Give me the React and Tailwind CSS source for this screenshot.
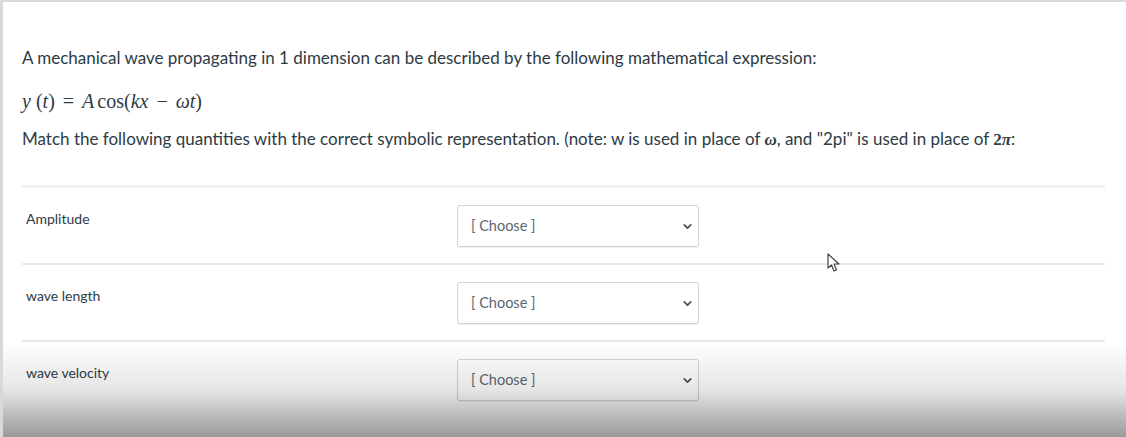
import { ChevronDown } from 'lucide-react';

const rows = ['Amplitude', 'wave length', 'wave velocity'];

const Choose = () => (
  <div className="flex items-center justify-between w-[242px] h-[42px] pl-[13px] pr-[4px] bg-white border border-[#d4d4d4] rounded-[3px] shadow-[0_1px_1px_rgba(0,0,0,0.06)]">
    <span className="text-[14.5px] text-[#5b6670]">[ Choose ]</span>
    <ChevronDown size={13} strokeWidth={3.2} className="text-[#4a4f55]" />
  </div>
);

const App = () => {
  return (
    <div className="relative w-[1126px] h-[437px] overflow-hidden bg-white border-t-2 border-l-[3px] border-[#d9d9d9] font-['Lato','Noto_Sans',sans-serif] text-[#2d3b45]">
      <div className="pl-[19px] pr-[21px] pt-[45px]">
        <p className="text-[17px] leading-[22px]">
          A mechanical wave propagating in 1 dimension can be described by the following mathematical expression:
        </p>
        <p className="mt-[20px] text-[20px] leading-[24px] font-['Liberation_Serif','DejaVu_Serif',serif]">
          <i>y</i> (<i>t</i>)<span className="mx-[8px]">=</span><i>A</i>
          <span className="ml-[3px]">cos(</span><i>kx</i>
          <span className="mx-[8px]">−</span><i>ωt</i>)
        </p>
        <p className="mt-[15px] text-[17px] leading-[22px]">
          Match the following quantities with the correct symbolic representation. (note: w is used in place of{' '}
          <i className="font-['Liberation_Serif',serif] font-bold">ω</i>, and "2pi" is used in place of{' '}
          <span className="font-['Liberation_Serif',serif] font-bold">2<i>π</i></span>:
        </p>

        <div className="mt-[34px] border-t-[3px] border-[#f2f2f2]">
          {rows.map((r, i) => (
            <div
              key={r}
              className={`flex items-start h-[77px] pt-[17px] ${i < rows.length - 1 ? 'border-b-2 border-[#e8e8e8]' : ''}`}
            >
              <div className="w-[435px] pl-[4px] pt-[3px] text-[14px]">{r}</div>
              <Choose />
            </div>
          ))}
        </div>
      </div>

      {/* video overlay shade */}
      <div className="pointer-events-none absolute left-0 right-0 bottom-0 h-[95px] bg-gradient-to-b from-transparent via-black/10 to-black/40" />

      {/* mouse cursor */}
      <svg className="absolute left-[824px] top-[251px]" width="14" height="20" viewBox="0 0 14 20">
        <path d="M1 1 L1 15 L4.5 12 L7 18 L9.5 17 L7 11 L12 11 Z" fill="white" stroke="#444" strokeWidth="1.2" strokeLinejoin="round" />
      </svg>
    </div>
  );
};

export default App;
